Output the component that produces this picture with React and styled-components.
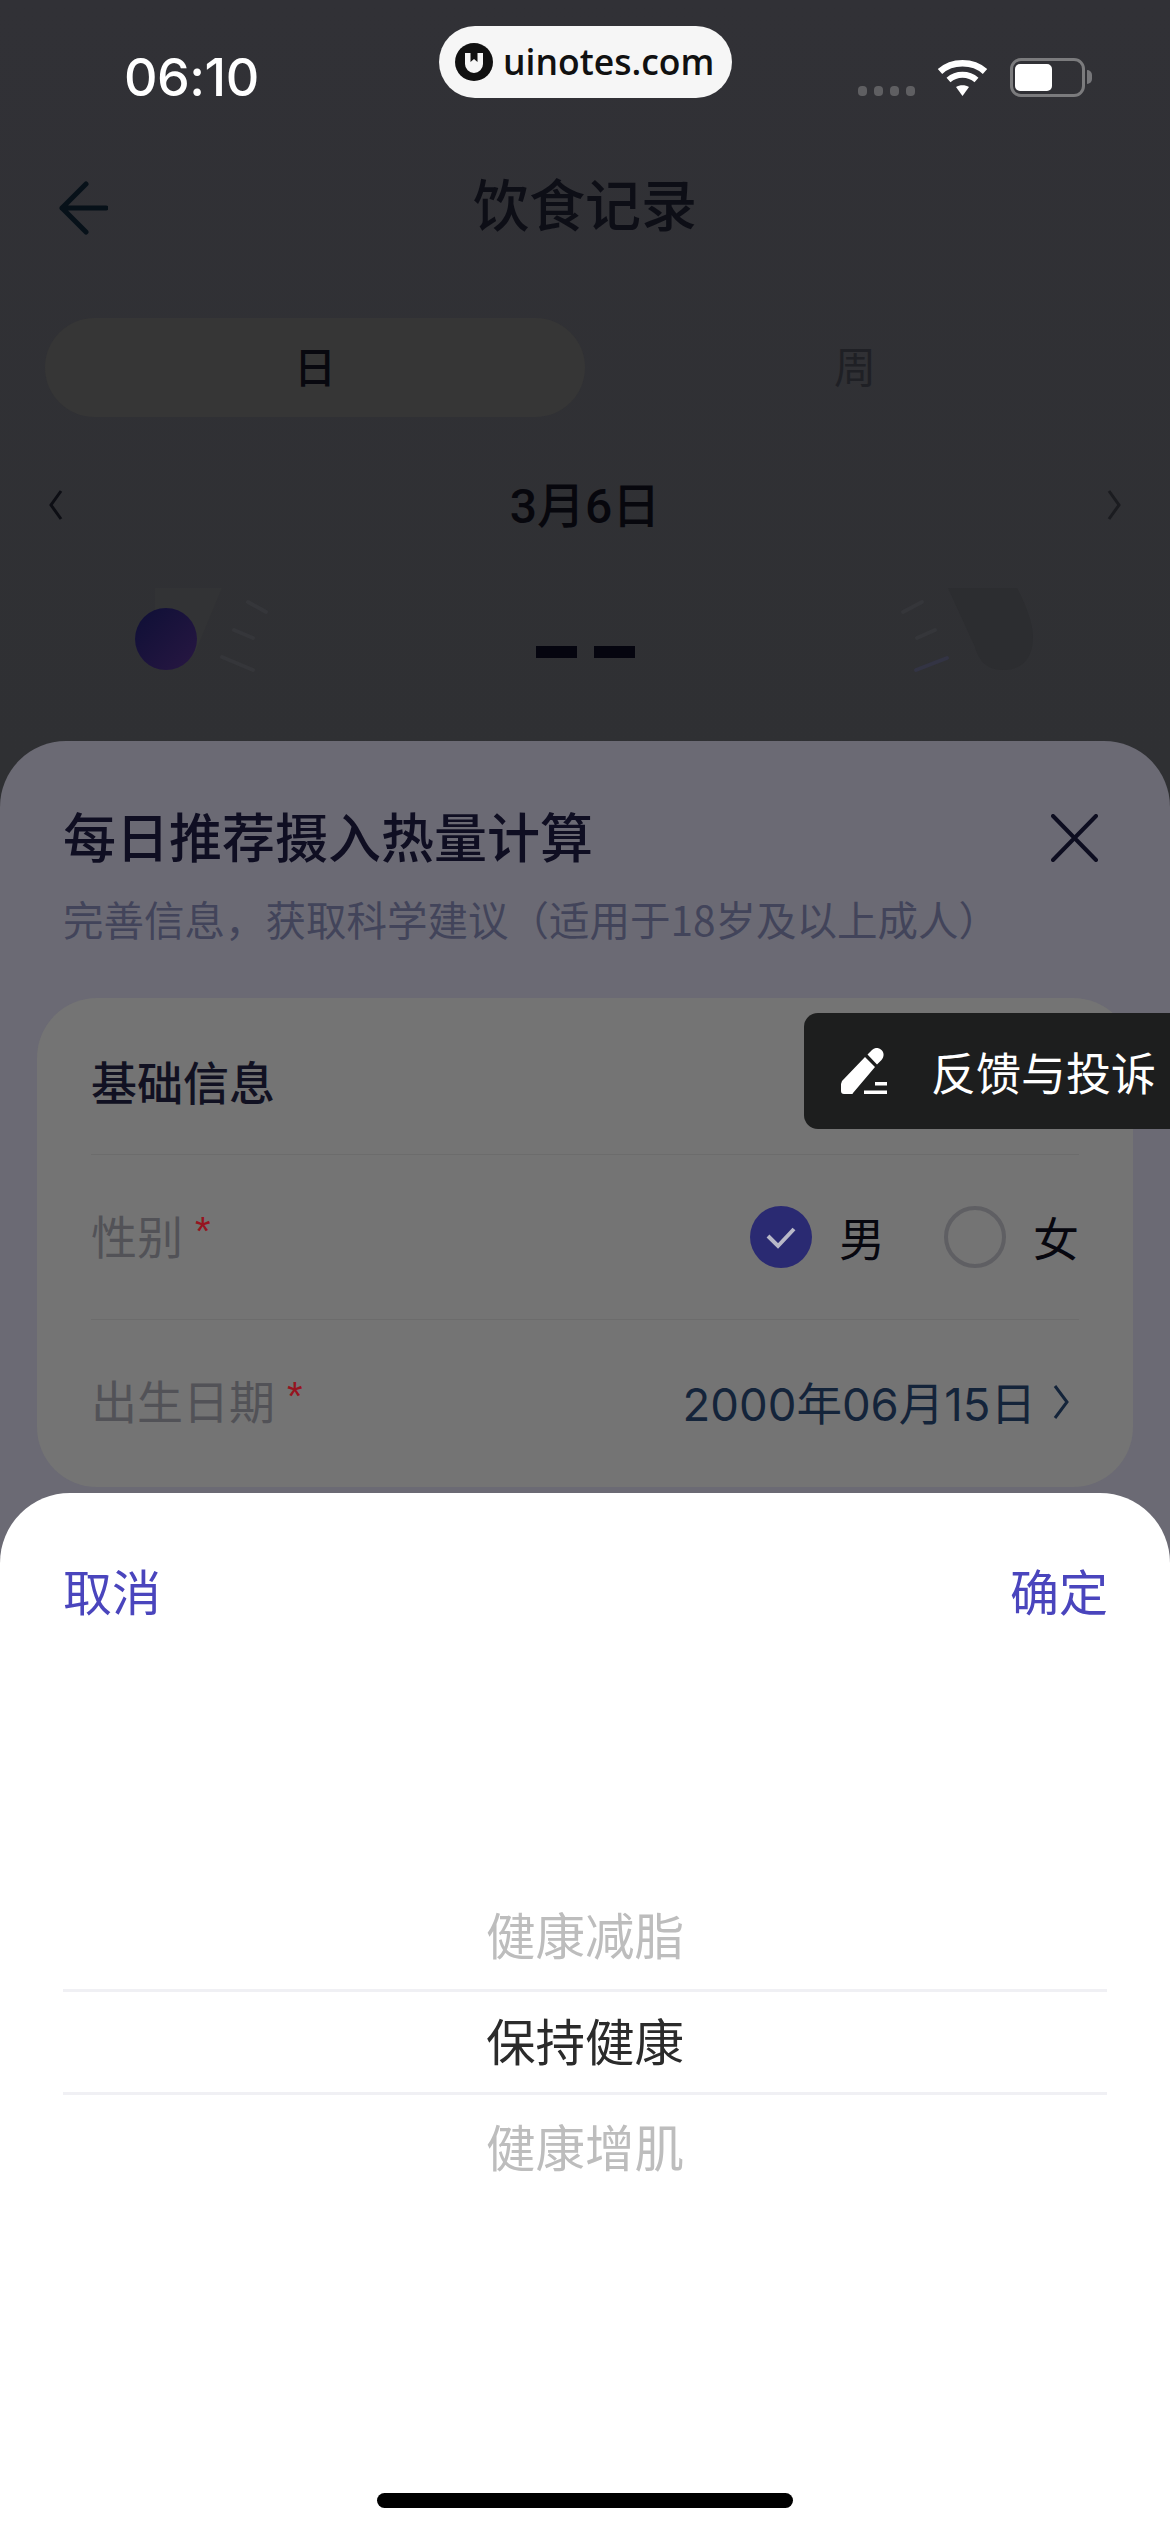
import React from "react";
import styled, { createGlobalStyle } from "styled-components";

const CJK = `"Noto Sans CJK SC", "Noto Sans", sans-serif`;

const GlobalStyle = createGlobalStyle`
  html, body {
    margin: 0;
    padding: 0;
    background: #313136;
  }
  * {
    box-sizing: border-box;
  }
`;

const Wordmark = () => (
  <svg width="38" height="38" viewBox="0 0 38 38">
    <circle cx="19" cy="19" r="19" fill="#111" />
    <path d="M10 10h5.500v9l3.500-3 3.500 3v-9H28v11a9 9 0 0 1-18 0z" fill="#f6f6f6" />
  </svg>
);

const Wifi = () => (
  <svg width="51" height="38" viewBox="0 0 51 38" fill="none" stroke="#fff">
    <path d="M3 13.500C15 2.500 36 2.500 48 13.500" strokeWidth="6.500" />
    <path d="M11.500 22c8-7 20-7 28 0" strokeWidth="6" />
    <path d="M19 29l6.500 9 6.500-9c-3.500-2.500-9.500-2.500-13 0z" fill="#fff" stroke="none" />
  </svg>
);

const LeftGauge = () => (
  <svg width="135" height="90" viewBox="0 0 135 90">
    <defs>
      <linearGradient id="dot" x1="0" y1="0" x2="1" y2="1">
        <stop offset="0" stopColor="#0e0f36" />
        <stop offset="1" stopColor="#281742" />
      </linearGradient>
    </defs>
    <path d="M20 0h67L60 65 20 60z" fill="#323335" />
    <circle cx="31" cy="51" r="31" fill="url(#dot)" />
    <path d="M113 14l18 10M99 42l19 8M87 69l31 13" stroke="#35363a" strokeWidth="4" strokeLinecap="round" />
  </svg>
);

const RightGauge = () => (
  <svg width="170" height="90" viewBox="0 0 170 90">
    <path d="M68 0h69c8 15 16 35 16 49 0 21-11 33-30 33-18 0-25-12-28-23z" fill="#2c2d30" />
    <path d="M42 14L23 24M55 42l-18 8" stroke="#35363a" strokeWidth="4" strokeLinecap="round" />
    <path d="M67 70L36 82" stroke="#333444" strokeWidth="4" strokeLinecap="round" />
  </svg>
);

const PencilIcon = () => (
  <svg width="46" height="46" viewBox="0 0 46 46" fill="#fff">
    <path d="M1 33L24 9l10 10-22 26a1 1 0 0 1-1 1H3a3 3 0 0 1-3-3v-7z" />
    <path d="M26.500 6.500L31 2a6.500 6.500 0 0 1 9.500 0c3 3 2.500 7 0 10L36 16.500z" />
    <rect x="34" y="34" width="12" height="3.500" />
    <rect x="23" y="42.500" width="23" height="3.500" />
  </svg>
);

const options = [
  { label: "健康减脂", active: false },
  { label: "保持健康", active: true },
  { label: "健康增肌", active: false },
];

const App = () => {
  return (
    <Screen>
      <GlobalStyle />
      <Watermark>
        <Wordmark />
        <WatermarkText>uinotes.com</WatermarkText>
      </Watermark>

      <StatusBar>
        <Time>06:10</Time>
        <StatusIcons>
          <Signal>
            <i />
            <i />
            <i />
            <i />
          </Signal>
          <Wifi />
          <Battery>
            <BatteryLevel />
          </Battery>
          <BatteryCap />
        </StatusIcons>
      </StatusBar>

      <Header>
        <BackButton>
          <svg width="50" height="54" viewBox="0 0 50 54" fill="none" stroke="#071119" strokeWidth="5" strokeLinecap="round" strokeLinejoin="round">
            <path d="M28 3L4 27l24 24M4 27h44" />
          </svg>
        </BackButton>
        <Title>饮食记录</Title>
      </Header>

      <Tabs>
        <Tab $active>日</Tab>
        <Tab>周</Tab>
      </Tabs>

      <DateRow>
        <svg width="16" height="30" viewBox="0 0 16 30" fill="none" stroke="#0d0e14" strokeWidth="3">
          <path d="M13 1L3 15l10 14" />
        </svg>
        <DateText>3月6日</DateText>
        <svg width="16" height="30" viewBox="0 0 16 30" fill="none" stroke="#1b1c20" strokeWidth="3">
          <path d="M3 1l10 14L3 29" />
        </svg>
      </DateRow>

      <GaugeRow>
        <GaugeSlot $side="left">
          <LeftGauge />
        </GaugeSlot>
        <Dashes>
          <Dash />
          <Dash />
        </Dashes>
        <GaugeSlot $side="right">
          <RightGauge />
        </GaugeSlot>
      </GaugeRow>

      <FormSheet>
        <SheetHead>
          <SheetTitle>每日推荐摄入热量计算</SheetTitle>
          <CloseIcon width="47" height="48" viewBox="0 0 47 48" stroke="#0d0d20" strokeWidth="4" strokeLinecap="round">
            <path d="M2 2l43 44M45 2L2 46" />
          </CloseIcon>
        </SheetHead>
        <SheetSub>完善信息，获取科学建议（适用于18岁及以上成人）</SheetSub>

        <Card>
          <CardTitle>基础信息</CardTitle>
          <FormRow>
            <FieldLabel>
              性别<Star>*</Star>
            </FieldLabel>
            <RadioGroup>
              <RadioOption>
                <RadioDot $checked>
                  <svg width="34" height="26" viewBox="0 0 34 26" fill="none" stroke="#b9b9c8" strokeWidth="4">
                    <path d="M4 12l10 10L30 5" />
                  </svg>
                </RadioDot>
                <RadioText>男</RadioText>
              </RadioOption>
              <RadioOption>
                <RadioDot />
                <RadioText>女</RadioText>
              </RadioOption>
            </RadioGroup>
          </FormRow>
          <FormRow>
            <FieldLabel>
              出生日期<Star>*</Star>
            </FieldLabel>
            <FieldValue>
              <span>2000年06月15日</span>
              <svg width="16" height="36" viewBox="0 0 16 36" fill="none" stroke="#14243a" strokeWidth="3">
                <path d="M2 2l12 16L2 34" />
              </svg>
            </FieldValue>
          </FormRow>
        </Card>
      </FormSheet>

      <Feedback>
        <PencilIcon />
        <FeedbackText>反馈与投诉</FeedbackText>
      </Feedback>

      <PickerSheet>
        <PickerHead>
          <PickerAction>取消</PickerAction>
          <PickerAction>确定</PickerAction>
        </PickerHead>
        <Wheel>
          {options.map((option) => (
            <WheelItem key={option.label} $active={option.active}>
              {option.label}
            </WheelItem>
          ))}
        </Wheel>
        <HomeBar />
      </PickerSheet>
    </Screen>
  );
};

const Screen = styled.div`
  position: relative;
  display: flex;
  flex-direction: column;
  width: 1170px;
  height: 2532px;
  overflow: hidden;
  background: linear-gradient(180deg, #313136 0%, #2f3033 30%);
  font-family: ${CJK};
`;

const Watermark = styled.div`
  position: absolute;
  top: 26px;
  left: 439px;
  display: flex;
  align-items: center;
  gap: 10px;
  width: 293px;
  height: 72px;
  padding-left: 16px;
  border-radius: 36px;
  background: #f6f6f6;
`;

const WatermarkText = styled.span`
  font-family: "Open Sans", sans-serif;
  font-size: 35.5px;
  font-weight: 600;
  color: #111;
  line-height: 1;
`;

const StatusBar = styled.div`
  display: flex;
  justify-content: space-between;
  align-items: center;
  height: 78px;
  margin-top: 38px;
  padding: 0 78px 0 124px;
`;

const Time = styled.span`
  font-family: Inter, sans-serif;
  font-size: 52px;
  font-weight: 500;
  color: #fff;
  letter-spacing: -0.5px;
`;

const StatusIcons = styled.div`
  display: flex;
  align-items: center;
`;

const Signal = styled.div`
  display: flex;
  gap: 7px;
  margin: 28px 22px 0 0;

  i {
    width: 9px;
    height: 10px;
    border-radius: 4px;
    background: #5f5f62;
  }
`;

const Battery = styled.div`
  width: 75px;
  height: 39px;
  margin-left: 22px;
  padding: 3px 2px;
  border: 3px solid #7b7b7d;
  border-radius: 11px;
`;

const BatteryLevel = styled.div`
  width: 37px;
  height: 100%;
  border-radius: 5px;
  background: #fff;
`;

const BatteryCap = styled.div`
  width: 5px;
  height: 14px;
  margin-left: 2px;
  border-radius: 0 5px 5px 0;
  background: #77777a;
`;

const Header = styled.header`
  position: relative;
  display: flex;
  justify-content: center;
  align-items: center;
  height: 90px;
  margin-top: 41px;
`;

const BackButton = styled.div`
  position: absolute;
  left: 58px;
  top: 24px;
  display: flex;
`;

const Title = styled.h1`
  margin: 0;
  font-size: 56px;
  font-weight: 500;
  color: #0d0e16;
  line-height: 90px;
`;

const Tabs = styled.div`
  display: flex;
  height: 99px;
  margin: 71px 45px 0;
`;

const Tab = styled.div`
  display: flex;
  justify-content: center;
  align-items: center;
  flex: 1;
  padding-bottom: 6px;
  border-radius: 50px;
  background: ${(p) => (p.$active ? "#363636" : "transparent")};
  font-size: 42px;
  font-weight: ${(p) => (p.$active ? 500 : 400)};
  color: ${(p) => (p.$active ? "#08080f" : "#1f2025")};
`;

const DateRow = styled.div`
  display: flex;
  justify-content: space-between;
  align-items: center;
  height: 60px;
  margin-top: 58px;
  padding: 0 48px;
`;

const DateText = styled.span`
  padding-bottom: 6px;
  font-family: Roboto, ${CJK};
  font-size: 48px;
  font-weight: 500;
  color: #07070d;
`;

const GaugeRow = styled.div`
  display: grid;
  grid-template-columns: 1fr auto 1fr;
  align-items: start;
  height: 153px;
  margin-top: 53px;
  padding: 0 120px;
`;

const GaugeSlot = styled.div`
  display: flex;
  justify-content: ${(p) => (p.$side === "left" ? "flex-start" : "flex-end")};
  padding-left: ${(p) => (p.$side === "left" ? "15px" : "0")};
`;

const Dashes = styled.div`
  display: flex;
  gap: 17px;
  margin-top: 58px;
`;

const Dash = styled.span`
  display: block;
  width: 41px;
  height: 12px;
  background: #05050f;
`;

const FormSheet = styled.section`
  flex: 1;
  padding: 58px 0 0;
  border-radius: 66px 66px 0 0;
  background: #6b6a74;
`;

const SheetHead = styled.div`
  display: flex;
  justify-content: space-between;
  align-items: center;
  padding: 0 72px 0 63px;
`;

const CloseIcon = styled.svg`
  margin-top: 5px;
`;

const SheetTitle = styled.h2`
  margin: 0;
  font-size: 53px;
  font-weight: 500;
  line-height: 72px;
  color: #0f0e22;
`;

const SheetSub = styled.p`
  margin: 18px 0 0 63px;
  font-size: 40.500px;
  line-height: 60px;
  color: #42445a;
`;

const Card = styled.div`
  height: 489px;
  margin: 49px 37px 0;
  padding: 49px 54px 0;
  border-radius: 60px;
  background: #747474;
`;

const CardTitle = styled.h3`
  margin: 0;
  padding-bottom: 41px;
  font-size: 46px;
  font-weight: 500;
  line-height: 66px;
  color: #111122;
`;

const FormRow = styled.div`
  display: flex;
  justify-content: space-between;
  align-items: center;
  height: 165px;
  border-top: 1px solid #6c6c6c;
`;

const FieldLabel = styled.span`
  display: flex;
  padding-bottom: 6px;
  font-size: 46px;
  color: #525257;
`;

const Star = styled.span`
  margin-left: 12px;
  font-family: "Liberation Sans", sans-serif;
  font-size: 40px;
  color: #96141f;
  line-height: 1.5;
`;

const RadioGroup = styled.div`
  display: flex;
  gap: 59px;
`;

const RadioOption = styled.label`
  display: flex;
  align-items: center;
  gap: 27px;
  font-size: 46px;
  color: #07070f;
`;

const RadioText = styled.span`
  padding-bottom: 3px;
`;

const RadioDot = styled.span`
  display: flex;
  justify-content: center;
  align-items: center;
  width: 62px;
  height: 62px;
  border-radius: 50%;
  border: ${(p) => (p.$checked ? "none" : "4px solid #5f5f63")};
  background: ${(p) => (p.$checked ? "#2a2a72" : "transparent")};
`;

const FieldValue = styled.span`
  display: flex;
  align-items: center;
  gap: 17px;
  padding-right: 10px;
  font-family: Inter, ${CJK};
  font-size: 45.500px;
  color: #14243a;

  span {
    padding-bottom: 3px;
  }
`;

const Feedback = styled.div`
  position: absolute;
  top: 1013px;
  right: 0;
  display: flex;
  align-items: center;
  gap: 44px;
  width: 366px;
  height: 116px;
  padding-left: 37px;
  border-radius: 14px 0 0 14px;
  background: #1d1e1e;
`;

const FeedbackText = styled.span`
  font-size: 45px;
  color: #fff;
  white-space: nowrap;
`;

const PickerSheet = styled.div`
  position: absolute;
  top: 1493px;
  left: 0;
  display: flex;
  flex-direction: column;
  width: 100%;
  height: 1039px;
  border-radius: 70px 70px 0 0;
  background: #fff;
`;

const PickerHead = styled.div`
  display: flex;
  justify-content: space-between;
  padding: 65px 62px 0 63px;
`;

const PickerAction = styled.span`
  font-size: 49px;
  line-height: 64px;
  color: #4a45bd;
`;

const Wheel = styled.div`
  display: flex;
  flex-direction: column;
  margin: 261px 63px 0;
`;

const WheelItem = styled.div`
  display: flex;
  justify-content: center;
  align-items: center;
  height: 106px;
  padding-bottom: 5px;
  font-size: 49.500px;
  color: ${(p) => (p.$active ? "#2b2b2b" : "#bdbdbd")};
  border-top: ${(p) => (p.$active ? "3px solid #f0f0f4" : "none")};
  border-bottom: ${(p) => (p.$active ? "3px solid #f0f0f4" : "none")};
`;

const HomeBar = styled.div`
  position: absolute;
  bottom: 24px;
  left: 377px;
  width: 416px;
  height: 15px;
  border-radius: 8px;
  background: #000;
`;

export default App;
